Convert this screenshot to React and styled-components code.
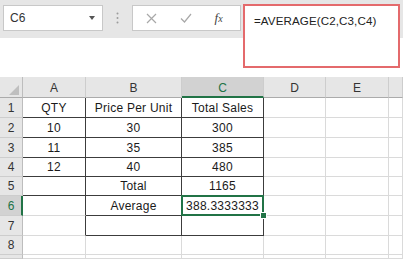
import React from 'react';
import styled, { createGlobalStyle, css } from 'styled-components';

const GREEN = '#217346';
const DARK = '#3c3c3c';
const LIGHT = '#dadada';

const GlobalStyle = createGlobalStyle`
  html, body {
    margin: 0;
    padding: 0;
    background: #fff;
    font-family: "Liberation Sans", Arial, sans-serif;
  }
`;

const Page = styled.div`
  width: 403px;
  height: 259px;
  overflow: hidden;
  background: #fff;
`;

const TopArea = styled.div`
  display: flex;
  align-items: flex-start;
  height: 77px;
  background: linear-gradient(#e6e6e6 0 38px, #fff 38px);
`;

const ToolBox = styled.div`
  display: flex;
  align-items: center;
  box-sizing: border-box;
  height: 26px;
  margin-top: 5px;
  background: #fff;
  border: 1px solid #c8c8c8;
`;

const NameBox = styled(ToolBox)`
  width: 100px;
  margin-left: 3px;
  padding: 0 7px 0 6px;
  justify-content: space-between;
  font-size: 12px;
  color: #333;
`;

const Caret = styled.span`
  width: 0;
  height: 0;
  border-left: 3.5px solid transparent;
  border-right: 3.5px solid transparent;
  border-top: 4px solid #555;
`;

const Grip = styled.div`
  width: 29px;
  display: flex;
  justify-content: center;
  padding-top: 12px;
`;

const FnBox = styled(ToolBox)`
  width: 109px;
  justify-content: space-around;
  padding: 0 6px 0 2px;
`;

const Fx = styled.span`
  font-family: "Liberation Serif", "Times New Roman", serif;
  font-style: italic;
  font-size: 13px;
  color: #444;
  & small {
    font-size: 10px;
  }
`;

const FormulaBox = styled.div`
  box-sizing: border-box;
  width: 157px;
  height: 64px;
  margin: 4px 0 0 2px;
  padding: 8px 9px;
  background: #fff;
  border: 2px solid #e46a6c;
  font-size: 11.6px;
  letter-spacing: 0.1px;
  color: #222;
`;

const Sheet = styled.div`
  display: grid;
  grid-template-columns: 23px 63px 96px 82px 62px 63px 1fr;
  grid-template-rows: 21px 20px 20px 20px 19px 19px 20px 20px 19px 1fr;
  height: 182px;
`;

const Corner = styled.div`
  position: relative;
  box-sizing: border-box;
  background: #e6e6e6;
  border-right: 1px solid #bdbdbd;
  border-bottom: 1px solid #ababab;
  &::after {
    content: '';
    position: absolute;
    right: 3px;
    bottom: 2px;
    width: 0;
    height: 0;
    border-left: 10px solid transparent;
    border-bottom: 10px solid #bfbfbf;
  }
`;

const ColHead = styled.div`
  box-sizing: border-box;
  display: flex;
  align-items: center;
  justify-content: center;
  background: #e6e6e6;
  border-right: 1px solid #cdcdcd;
  border-bottom: 1px solid #ababab;
  font-size: 12px;
  color: #333;
  padding-top: 2px;
  ${(p) =>
    p.$active &&
    css`
      background: #d2d2d2;
      color: ${GREEN};
      border-bottom: 2px solid ${GREEN};
      padding-top: 3px;
    `}
`;

const RowHead = styled.div`
  box-sizing: border-box;
  display: flex;
  align-items: center;
  justify-content: center;
  background: #e6e6e6;
  border-right: 1px solid #bdbdbd;
  border-bottom: 1px solid #cdcdcd;
  font-size: 12px;
  color: #333;
  ${(p) =>
    p.$active &&
    css`
      background: #d2d2d2;
      color: ${GREEN};
      border-right: 2px solid ${GREEN};
      padding-left: 1px;
    `}
`;

const Cell = styled.div`
  position: relative;
  box-sizing: border-box;
  display: flex;
  align-items: center;
  justify-content: center;
  border-right: 1px solid ${(p) => (p.$r ? DARK : LIGHT)};
  border-bottom: 1px solid ${(p) => (p.$b ? DARK : LIGHT)};
  font-size: 12px;
  letter-spacing: 0.25px;
  color: #1a1a1a;
  white-space: nowrap;
  ${(p) =>
    p.$selected &&
    css`
      z-index: 2;
      &::after {
        content: '';
        position: absolute;
        top: -1px;
        left: -1px;
        right: -1px;
        bottom: -1px;
        border: 2px solid ${GREEN};
      }
      &::before {
        content: '';
        position: absolute;
        right: -4px;
        bottom: -4px;
        width: 5px;
        height: 5px;
        background: ${GREEN};
        border: 1px solid #fff;
        z-index: 3;
      }
    `}
`;

const columns = ['A', 'B', 'C', 'D', 'E', ''];

const rows = [
  ['QTY', 'Price Per Unit', 'Total Sales'],
  ['10', '30', '300'],
  ['11', '35', '385'],
  ['12', '40', '480'],
  ['', 'Total', '1165'],
  ['', 'Average', '388.3333333'],
  ['', '', ''],
  ['', '', ''],
  ['', '', ''],
];

// which edges carry the dark table border, per row for columns A..C
const borderFor = (row, col) => {
  if (col > 2) return { r: false, b: false };
  if (row <= 5) return { r: true, b: true };
  if (row === 6 || row === 7) return { r: true, b: col > 0 };
  return { r: false, b: false };
};

const CrossIcon = () => (
  <svg width="11" height="11" viewBox="0 0 11 11">
    <path d="M1 1 L10 10 M10 1 L1 10" stroke="#a8a8a8" strokeWidth="1.2" fill="none" />
  </svg>
);

const CheckIcon = () => (
  <svg width="12" height="10" viewBox="0 0 12 10">
    <path d="M1 5.5 L4.5 9 L11 1" stroke="#a8a8a8" strokeWidth="1.2" fill="none" />
  </svg>
);

const GripDots = () => (
  <svg width="3" height="12" viewBox="0 0 3 12">
    <circle cx="1.5" cy="1.5" r="1" fill="#9c9c9c" />
    <circle cx="1.5" cy="6" r="1" fill="#9c9c9c" />
    <circle cx="1.5" cy="10.5" r="1" fill="#9c9c9c" />
  </svg>
);

const App = () => (
  <Page>
    <GlobalStyle />
    <TopArea>
      <NameBox>
        <span>C6</span>
        <Caret />
      </NameBox>
      <Grip>
        <GripDots />
      </Grip>
      <FnBox>
        <CrossIcon />
        <CheckIcon />
        <Fx>
          f<small>x</small>
        </Fx>
      </FnBox>
      <FormulaBox>=AVERAGE(C2,C3,C4)</FormulaBox>
    </TopArea>
    <Sheet>
      <Corner />
      {columns.map((c, i) => (
        <ColHead key={'h' + i} $active={c === 'C'}>
          {c}
        </ColHead>
      ))}
      {rows.map((row, r) => (
        <React.Fragment key={r}>
          {/* row 9 is only a sliver at the bottom edge, no label visible */}
          <RowHead $active={r + 1 === 6}>{r < 8 ? r + 1 : ''}</RowHead>
          {columns.map((_, c) => {
            const edge = borderFor(r + 1, c);
            return (
              <Cell
                key={c}
                $r={edge.r}
                $b={edge.b}
                $selected={r + 1 === 6 && c === 2}
              >
                {row[c] || ''}
              </Cell>
            );
          })}
        </React.Fragment>
      ))}
    </Sheet>
  </Page>
);

export default App;
